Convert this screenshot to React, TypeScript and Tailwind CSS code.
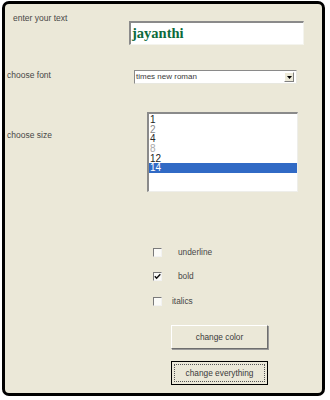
import React from "react";

const ui = { fontFamily: '"Liberation Sans", Arial, sans-serif' };

function Check({ checked }: { checked?: boolean }) {
  return (
    <div className="w-[9px] h-[9px] border-t border-l border-[#7a7a7a] border-r border-b border-r-[#f2f2f2] border-b-[#f2f2f2] bg-[#fbfbf8] flex items-center justify-center">
      {checked && (
        <svg width="7" height="7" viewBox="0 0 7 7">
          <polyline points="0.8,3.2 2.6,5.2 6.3,1.2" fill="none" stroke="#111" strokeWidth="1.5" />
        </svg>
      )}
    </div>
  );
}

export default function App() {
  const items: { v: string; c: string }[] = [
    { v: "1", c: "text-[#222222]" },
    { v: "2", c: "text-[#8a8a8a]" },
    { v: "4", c: "text-[#2a2a2a]" },
    { v: "8", c: "text-[#a8a8a8]" },
    { v: "12", c: "text-[#222222]" },
  ];
  return (
    <div className="w-[330px] h-[400px] bg-white pt-[1px] pl-[2px]" style={ui}>
      <div className="w-[323px] h-[395px] border-[3px] border-black rounded-[7px] bg-[#ebe8d8] flex flex-col text-[#474747]">
        {/* row 1 */}
        <div className="flex items-start">
          <div className="w-[124px] pl-[8px] pt-[9px] text-[8.5px] leading-[10px]">enter your text</div>
          <div className="mt-[17px] w-[175px] h-[24px] bg-white border-t-2 border-l-2 border-t-[#8a8a8a] border-l-[#8a8a8a] border-r border-b border-r-[#f4f4ee] border-b-[#f4f4ee] flex items-center pl-[1px]">
            <span className="text-[14.5px] font-bold text-[#0b6a3b] leading-none" style={{ fontFamily: '"Liberation Serif", "Times New Roman", serif' }}>
              jayanthi
            </span>
          </div>
        </div>
        {/* row 2 */}
        <div className="flex items-start mt-[25px]">
          <div className="w-[129px] pl-[2px] text-[8.5px] leading-[10px]">choose font</div>
          <div className="w-[163px] h-[14px] bg-white border-t border-l border-[#8a8a8a] border-r border-b border-r-[#e8e8e0] border-b-[#e8e8e0] flex items-center">
            <span className="flex-1 pl-[1px] text-[8px] leading-none text-[#3a3a3a]">times new roman</span>
            <div className="w-[10px] h-[10px] mr-[2px] bg-[#ece9d8] border-t border-l border-white border-r border-b border-r-[#808080] border-b-[#808080] flex items-center justify-center">
              <svg width="5" height="3" viewBox="0 0 5 3">
                <polygon points="0,0 5,0 2.5,3" fill="#000" />
              </svg>
            </div>
          </div>
        </div>
        {/* row 3 */}
        <div className="flex items-start mt-[28px]">
          <div className="w-[142px] pl-[2px] pt-[18px] text-[8.5px] leading-[10px]">choose size</div>
          <div className="w-[151px] h-[80px] bg-white border-t-2 border-l-2 border-t-[#8a8a8a] border-l-[#8a8a8a] border-r border-b border-r-[#eeeeea] border-b-[#eeeeea] pt-[1px] text-[10px]">
            {items.map((it) => (
              <div key={it.v} className={`h-[9.7px] leading-[9.7px] pl-[1px] ${it.c}`}>
                {it.v}
              </div>
            ))}
            <div className="h-[9.7px] leading-[9.7px] pl-[1px] bg-[#316ac5] text-white">14</div>
          </div>
        </div>
        {/* checkboxes */}
        <div className="flex flex-col pl-[148px] mt-[56px] text-[8.3px]">
          <div className="flex items-center h-[9px]">
            <Check />
            <span className="ml-[16px] leading-none">underline</span>
          </div>
          <div className="flex items-center h-[9px] mt-[15px]">
            <Check checked />
            <span className="ml-[16px] leading-none">bold</span>
          </div>
          <div className="flex items-center h-[9px] mt-[16px]">
            <Check />
            <span className="ml-[10px] leading-none">italics</span>
          </div>
        </div>
        {/* buttons */}
        <div className="flex flex-col pl-[166px] mt-[19px] text-[8.3px] text-[#3a3a3a]">
          <div className="w-[97px] h-[24px] border-t border-l border-white border-r border-b border-r-[#6e6e6e] border-b-[#6e6e6e] bg-[#ebe8d8] flex items-center justify-center shadow-[1px_1px_0_#9a9a9a]">
            change color
          </div>
          <div className="mt-[12px] w-[97px] h-[24px] border border-black bg-[#ebe8d8] p-[2px]">
            <div className="w-full h-full border border-dotted border-[#555] flex items-center justify-center">
              change everything
            </div>
          </div>
        </div>
      </div>
    </div>
  );
}
